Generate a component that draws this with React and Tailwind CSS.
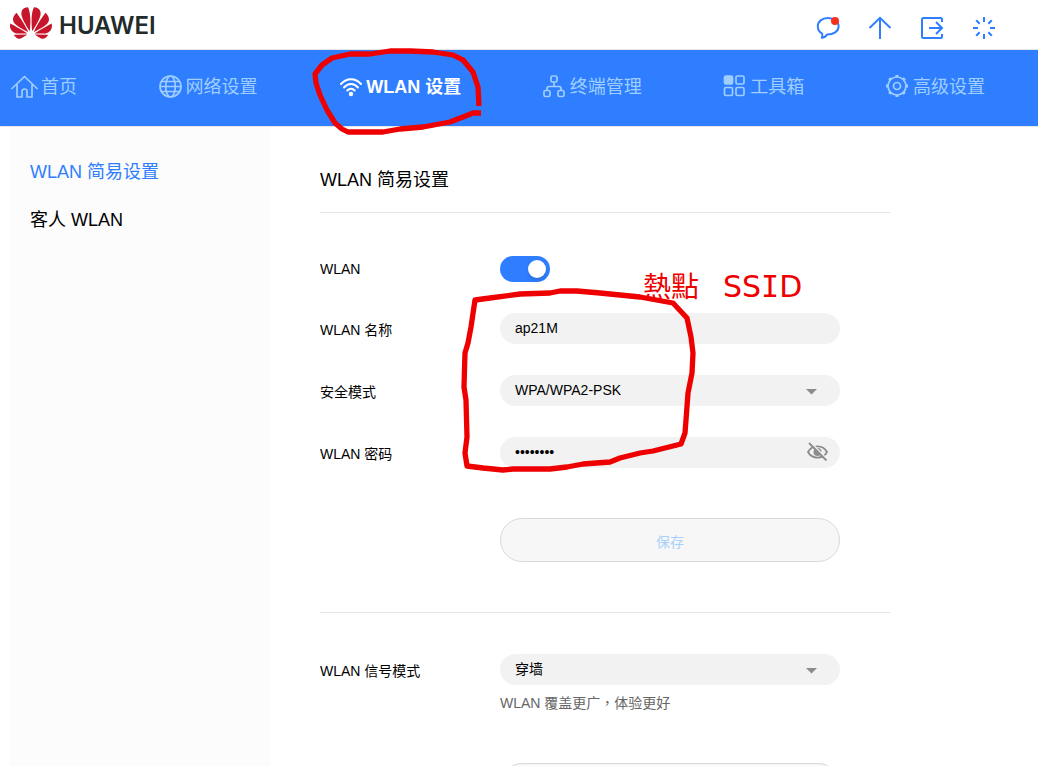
import { SiHuawei } from "react-icons/si";

const Icon = ({ children, w = 24 }) => (
  <svg width={w} height="24" viewBox={`0 0 ${w} 24`} fill="none" stroke="currentColor" strokeWidth="1.700" aria-hidden="true" className="shrink-0">
    {children}
  </svg>
);

const actions = [
  ["消息", <Icon><path strokeLinejoin="round" strokeWidth="2" d="M12 2C6 2 1.800 5.600 1.800 10.300c0 3.400 1.700 6 4.400 7.300.2 1.500.2 2.900-.4 4.200 2.600-.2 4-1.300 5.200-3.200 6.500.1 11.600-3.200 11.600-8.300C22.600 5.600 18 2 12 2z" /><circle cx="19" cy="5" r="4" fill="#f5301e" stroke="none" /></Icon>],
  ["更新", <Icon><path strokeWidth="2" d="M12 23V2M1.500 12 12 1.800 22.500 12" /></Icon>],
  ["退出", <Icon><path strokeWidth="2" d="M22 6V3.500Q22 2 20.500 2h-17Q2 2 2 3.500v17Q2 22 3.500 22h17q1.500 0 1.500-1.500V18M9 12h13M16 6l6 6-6 6" /></Icon>],
  ["加载", <Icon><path strokeWidth="2" d="M12 1v5M12 18v5M1 12h5M18 12h5M4.200 4.200l3.500 3.500M16.300 16.300l3.500 3.500M19.800 4.200l-3.500 3.500M7.700 16.300l-3.500 3.500" /></Icon>],
];

const gear = [0, 45, 90, 135, 180, 225, 270, 315];

const tabs = [
  ["首页", <Icon w={27}><path strokeLinejoin="round" strokeLinecap="round" d="M1 13.500 13.500 1.500 26 13.500M6 10v12h5v-5.500q0-2.500 2.500-2.500t2.500 2.500V22h5V10" /></Icon>],
  ["网络设置", <Icon><circle cx="11.500" cy="11.500" r="10.500" /><ellipse cx="11.500" cy="11.500" rx="4.800" ry="10.500" /><path d="M2.500 6.500h18M1 11.500h21M2.500 16.500h18" /></Icon>],
  ["WLAN 设置", <Icon><g strokeWidth="2" strokeLinecap="round"><path d="M2 9C7.500 2.500 16.500 2.500 22 9M5 12.500c4-4.800 10-4.800 14 0M8.300 15.500c2.200-2.500 5.200-2.500 7.400 0" /></g><circle cx="12" cy="19" r="2.200" fill="currentColor" stroke="none" /></Icon>],
  ["终端管理", <Icon><rect x="8" y="1" width="6" height="6" rx="1.500" /><rect x="1" y="15.500" width="6" height="6" rx="1.500" /><rect x="15" y="15.500" width="6" height="6" rx="1.500" /><path d="M11 7V11.500M4 15.500V13.500q0-2 2-2h10q2 0 2 2v2" /></Icon>],
  ["工具箱", <Icon><rect x="1.500" y="1" width="8" height="8" rx="1.500" fill="currentColor" /><rect x="13" y="1" width="8" height="8" rx="1.500" /><rect x="1.500" y="12.500" width="8" height="8" rx="1.500" /><rect x="13" y="12.500" width="8" height="8" rx="1.500" /></Icon>],
  ["高级设置", <Icon><g transform="translate(-1 -1)"><circle cx="12" cy="12" r="9" /><circle cx="12" cy="12" r="3.500" />{gear.map((a) => <path key={a} strokeWidth="3" d="M12 1V3" transform={`rotate(${a} 12 12)`} />)}</g></Icon>],
];

const field = "h-[31px] w-full appearance-none rounded-full bg-[#f2f2f2] px-[15px] pb-0.5 text-sm text-black outline-none";

const Row = ({ id, label, children }) => (
  <div className="flex items-start">
    <label htmlFor={id} className="w-[180px] shrink-0 pt-[7px] leading-5">{label}</label>
    <div className="relative w-full max-w-[340px]">{children}</div>
  </div>
);

const Caret = () => (
  <svg className="pointer-events-none absolute top-[14px] right-[23px]" width="11" height="6" viewBox="0 0 11 6" fill="#8c8c8c" aria-hidden="true">
    <path d="M0 0h11L5.500 5.500z" />
  </svg>
);

const Annotations = () => (
  <>
    <svg className="pointer-events-none absolute top-0 left-0" width="720" height="490" viewBox="0 0 720 490" fill="none" stroke="#ee0000" strokeWidth="5.300" strokeLinejoin="round" aria-hidden="true">
      <path d="M479 106 478 87 473 72 463 60 453 55 433 52 410 51 390 51 370 54 350 54 332 58 322 65 315 74 316 83 320 95 327 110 335 123 342 129 348 132 383 132 400 129 423 127 450 122 463 117 473 113 481 113" />
      <path d="M475 300 490 298 520 294 550 293 560 291 577 291 600 293 640 297 673 303 687 318 691 337 693 353 692 373 688 393 686 420 685 433 681 444 653 451 640 453 620 458 610 462 583 464 567 467 550 469 513 469 503 470 483 468 467 466 465 453 467 437 466 400 464 387 465 353 468 343 471 327z" />
    </svg>
    <p className="pointer-events-none absolute top-[267px] left-[643px] flex items-start gap-6 text-[#ee0000]">
      <span lang="zh-TW" className="font-['Noto_Sans_CJK_TC',sans-serif] text-[28px]/9">熱點</span>
      <span className="font-['DejaVu_Sans',sans-serif] text-3xl/10">SS<span className="font-['DejaVu_Sans_Mono',monospace]">I</span>D</span>
    </p>
  </>
);

export default function App() {
  return (
    <div lang="zh-CN" className="relative flex h-screen flex-col overflow-hidden bg-white font-['Liberation_Sans','Noto_Sans_CJK_SC',sans-serif] text-sm text-black">
      <header className="flex h-[50px] shrink-0 items-center justify-between border-b border-[#e5e5e5] pr-[42px] pl-[10px]">
        <a href="#home" className="flex items-center gap-[7px]">
          <SiHuawei size={42} className="mb-1 text-[#c7162c]" aria-hidden="true" />
          <span className="pt-0.5 font-['Inter',sans-serif] text-2xl font-semibold text-[#232b2b]">HUAWEI</span>
        </a>
        <div className="flex gap-7 pt-1.5 text-[#2f7eff]">
          {actions.map(([name, icon]) => (
            <button key={name} type="button" aria-label={name}>{icon}</button>
          ))}
        </div>
      </header>

      <nav className="flex h-[76px] shrink-0 items-center justify-between bg-[#2f7eff] pr-[53px] pb-0.5 pl-[11px]">
        {tabs.map(([name, icon]) => (
          <a key={name} href="#tab" className={name === "WLAN 设置" ? "flex items-center gap-[3px] text-lg font-bold text-white" : "flex items-center gap-[3px] text-lg text-[#9fceff]"}>
            {icon}
            <span>{name}</span>
          </a>
        ))}
      </nav>

      <div className="flex min-h-0 flex-1 border-t border-[#e5e5e5] pl-[10px]">
        <aside className="flex w-[260px] shrink-0 flex-col gap-5 bg-[#fcfcfc] px-5 pt-[31px] text-lg">
          <a href="#easy" className="text-[#2f7eff]">WLAN 简易设置</a>
          <a href="#guest">客人 WLAN</a>
        </aside>

        <main className="flex-1 overflow-y-auto px-[50px] pt-[39px] [scrollbar-width:none]">
          <form className="max-w-[570px] pb-[50px]">
            <h1 className="border-b border-[#e5e5e5] pb-[18px] text-lg">WLAN 简易设置</h1>
            <div className="flex flex-col gap-[31px] pt-[43px]">
              <div className="flex h-[26px] items-center">
                <label htmlFor="wlan" className="w-[180px]">WLAN</label>
                <div className="relative h-[26px] w-[50px]">
                  <input id="wlan" type="checkbox" role="switch" defaultChecked className="block h-[26px] w-[50px] appearance-none rounded-full bg-[#2f7eff]" />
                  <span className="pointer-events-none absolute top-1 right-1 size-[18px] rounded-full bg-white shadow-md" />
                </div>
              </div>
              <Row id="ssid" label="WLAN 名称">
                <input id="ssid" type="text" defaultValue="ap21M" className={field} />
              </Row>
              <Row id="security" label="安全模式">
                <select id="security" className={field}><option>WPA/WPA2-PSK</option></select>
                <Caret />
              </Row>
              <Row id="password" label="WLAN 密码">
                <input id="password" type="password" defaultValue="12345678" className={field} />
                <button type="button" aria-label="显示密码" className="absolute top-[5px] right-3 text-[#8c8c8c]">
                  <svg width="21" height="20" viewBox="0 0 21 20" fill="none" stroke="currentColor" strokeWidth="1.800" aria-hidden="true">
                    <path d="M1 10C5 2.500 16 2.500 20 10C16 17.500 5 17.500 1 10z" />
                    <circle cx="10.500" cy="10" r="4" fill="currentColor" stroke="none" />
                    <path stroke="#f2f2f2" d="M3.500.5l17 17" />
                    <path d="M2 1l17.500 17.500" />
                  </svg>
                </button>
              </Row>
            </div>
            <div className="border-b border-[#e5e5e5] py-[50px] pl-[180px]">
              <button type="submit" className="h-11 w-full max-w-[340px] rounded-full border border-[#d9d9d9] bg-[#f7f7f7] pt-1 text-[#a8d0fb]">保存</button>
            </div>
            <div className="pt-[41px]">
              <Row id="mode" label="WLAN 信号模式">
                <select id="mode" className={field}><option>穿墙</option></select>
                <Caret />
                <p className="pt-2 leading-5 text-[#666666]">WLAN 覆盖更广<span lang="zh-TW" className="font-['Noto_Sans_CJK_TC',sans-serif] leading-none">，</span>体验更好</p>
              </Row>
            </div>
            <div className="pt-[50px] pl-[180px]">
              <button type="submit" className="h-11 w-full max-w-[340px] rounded-full border border-[#d9d9d9] bg-[#f7f7f7] pt-1 text-[#a8d0fb]">保存</button>
            </div>
          </form>
        </main>
      </div>
      <Annotations />
    </div>
  );
}
